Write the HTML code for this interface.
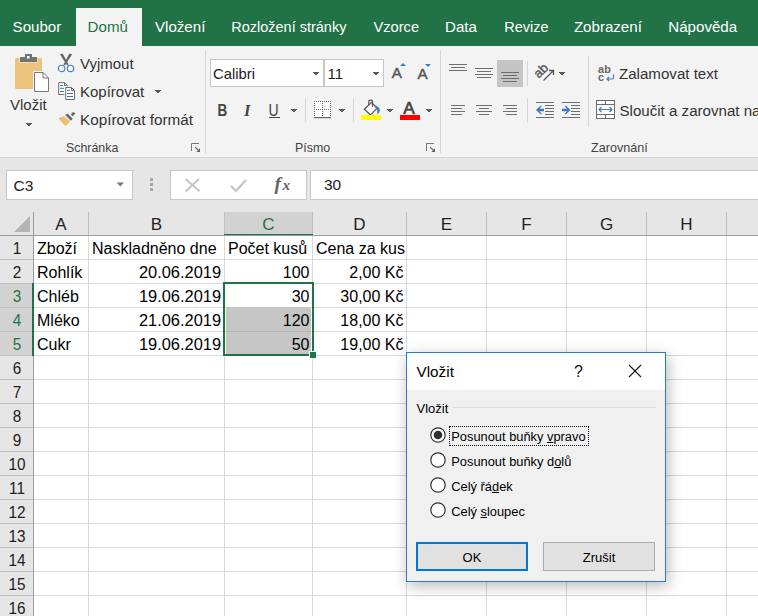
<!DOCTYPE html>
<html><head><meta charset="utf-8"><style>
html,body{margin:0;padding:0;width:758px;height:616px;overflow:hidden;background:#fff}
body{position:relative;font-family:"Liberation Sans",sans-serif}
.t{position:absolute;white-space:nowrap}
.s{}
.r{position:absolute;display:block}
</style></head><body>
<div class="r" style="left:0px;top:0px;width:758px;height:46px;background:#217346;"></div>
<div class="r" style="left:76px;top:8px;width:66px;height:38px;background:#f3f3f3;"></div>
<div class="t " style="left:12.6px;top:18px;font-size:15.1px;line-height:18px;color:#ffffff;">Soubor</div>
<div class="t " style="left:87.6px;top:18px;font-size:15.1px;line-height:18px;color:#217346;">Domů</div>
<div class="t " style="left:155px;top:18px;font-size:15.1px;line-height:18px;color:#ffffff;">Vložení</div>
<div class="t " style="left:231.2px;top:19px;font-size:14.5px;line-height:17px;color:#ffffff;">Rozložení stránky</div>
<div class="t " style="left:373.4px;top:18px;font-size:14.7px;line-height:18px;color:#ffffff;">Vzorce</div>
<div class="t " style="left:445px;top:18px;font-size:15.1px;line-height:18px;color:#ffffff;">Data</div>
<div class="t " style="left:504.2px;top:19px;font-size:14.5px;line-height:17px;color:#ffffff;">Revize</div>
<div class="t " style="left:573.9px;top:18px;font-size:15.1px;line-height:18px;color:#ffffff;">Zobrazení</div>
<div class="t " style="left:668.3px;top:18px;font-size:15.1px;line-height:18px;color:#ffffff;">Nápověda</div>
<div class="r" style="left:0px;top:46px;width:758px;height:111px;background:#f3f3f3;"></div>
<div class="r" style="left:0px;top:157px;width:758px;height:1px;background:#d6d6d6;"></div>
<div class="r" style="left:205px;top:50px;width:1px;height:103px;background:#d5d5d5;"></div>
<div class="r" style="left:440px;top:50px;width:1px;height:103px;background:#d5d5d5;"></div>
<svg class="r" style="left:10px;top:50px" width="45" height="45" viewBox="0 0 45 45">
<rect x="5" y="8" width="27" height="31" rx="1.5" fill="#ecc47d"/>
<rect x="9.5" y="6.5" width="18" height="6" fill="#f3f3f3"/>
<rect x="10" y="7" width="17" height="5" fill="#737373"/>
<rect x="15" y="4" width="7" height="4" fill="#737373"/>
<rect x="17" y="6" width="2.5" height="2.5" fill="#fff"/>
<rect x="23" y="21" width="17" height="22" fill="#f3f3f3"/>
<path d="M24.5 22.5 H33 L38.5 28 V41.5 H24.5 Z" fill="#fff" stroke="#777" stroke-width="1"/>
<path d="M33 22.5 V28 H38.5" fill="none" stroke="#777" stroke-width="1"/>
</svg>
<div class="t  s" style="left:10px;top:96px;font-size:15px;line-height:18px;color:#333;">Vložit</div>
<svg class="r" style="left:26px;top:123px" width="6" height="3"><rect x="0" y="0" width="6" height="1" fill="#595959"/><rect x="1" y="1" width="4" height="1" fill="#595959"/><rect x="2" y="2" width="2" height="1" fill="#595959"/></svg>
<svg class="r" style="left:54px;top:50px" width="26" height="26" viewBox="0 0 26 26">
<path d="M6 4.6 L8.6 3.6 L14.6 14.6 L13.2 15.4 Z" fill="#666"/>
<path d="M18.1 4.6 L15.5 3.6 L9.5 14.6 L10.9 15.4 Z" fill="#666"/>
<circle cx="7.6" cy="18.4" r="3.2" stroke="#4a7fc1" stroke-width="1.15" fill="none"/>
<circle cx="16.5" cy="18.4" r="3.2" stroke="#4a7fc1" stroke-width="1.15" fill="none"/>
</svg>
<div class="t  s" style="left:80px;top:55px;font-size:15px;line-height:18px;color:#333;">Vyjmout</div>
<svg class="r" style="left:54px;top:78px" width="26" height="26" viewBox="0 0 26 26">
<path d="M4.7 4.7 H10.5 L13.5 7.7 V16.5 H4.7 Z" fill="#fff" stroke="#6d6d6d" stroke-width="1"/>
<path d="M10.5 4.7 V7.7 H13.5" fill="none" stroke="#6d6d6d" stroke-width="1"/>
<path d="M6 7.5 H9 M6 10.3 H10 M6 13.5 H10" stroke="#3d74b8" stroke-width="1"/>
<path d="M11.7 9.5 H17.5 L20.5 12.5 V21.5 H11.7 Z" fill="#fff" stroke="#f3f3f3" stroke-width="2.6"/>
<path d="M11.7 9.5 H17.5 L20.5 12.5 V21.5 H11.7 Z" fill="#fff" stroke="#6d6d6d" stroke-width="1"/>
<path d="M17.5 9.5 V12.5 H20.5" fill="none" stroke="#6d6d6d" stroke-width="1"/>
<path d="M13 12.4 H16 M13 15.5 H19 M13 18.5 H19" stroke="#3d74b8" stroke-width="1"/>
</svg>
<div class="t  s" style="left:80px;top:83px;font-size:15px;line-height:18px;color:#333;">Kopírovat</div>
<svg class="r" style="left:155px;top:90px" width="6" height="3"><rect x="0" y="0" width="6" height="1" fill="#595959"/><rect x="1" y="1" width="4" height="1" fill="#595959"/><rect x="2" y="2" width="2" height="1" fill="#595959"/></svg>
<svg class="r" style="left:54px;top:106px" width="26" height="26" viewBox="0 0 26 26">
<path d="M4.4 12.2 L9.9 10.1 L16.2 15.6 L11.4 20.3 Z" fill="#eabf72"/>
<path d="M11.2 9.1 L13.5 7.6 L18.8 12.7 L16.9 14.8 Z" fill="#6a6a6a"/>
<path d="M16.7 8.4 L19.2 5.7 L21.5 7.6 L18.6 10.3 Z" fill="#6a6a6a"/>
</svg>
<div class="t  s" style="left:80px;top:111px;font-size:15.3px;line-height:18px;color:#333;">Kopírovat formát</div>
<div class="t " style="left:66px;top:141px;font-size:12.4px;line-height:15px;color:#444;">Schránka</div>
<svg class="r" style="left:191px;top:143px" width="10" height="10" viewBox="0 0 10 10"><path d="M0.5 8 V0.5 H8" stroke="#777" fill="none"/><path d="M4.2 4.2 L7.5 7.5" stroke="#666" stroke-width="1.1" fill="none"/><path d="M9 5.3 V9 H5.3 Z" fill="#666"/></svg>
<div class="r" style="left:210px;top:59px;width:114px;height:28px;background:#fff;box-sizing:border-box;border:1px solid #c6c6c6"></div>
<div class="t " style="left:213px;top:65px;font-size:14.8px;line-height:18px;color:#222;">Calibri</div>
<svg class="r" style="left:313px;top:72px" width="6" height="3"><rect x="0" y="0" width="6" height="1" fill="#595959"/><rect x="1" y="1" width="4" height="1" fill="#595959"/><rect x="2" y="2" width="2" height="1" fill="#595959"/></svg>
<div class="r" style="left:324px;top:59px;width:60px;height:28px;background:#fff;box-sizing:border-box;border:1px solid #c6c6c6"></div>
<div class="t " style="left:327.5px;top:65px;font-size:15px;line-height:18px;color:#222;">11</div>
<svg class="r" style="left:373px;top:72px" width="6" height="3"><rect x="0" y="0" width="6" height="1" fill="#595959"/><rect x="1" y="1" width="4" height="1" fill="#595959"/><rect x="2" y="2" width="2" height="1" fill="#595959"/></svg>
<svg class="r" style="left:388px;top:60px" width="20" height="22" viewBox="0 0 20 22"><text x="3.7" y="18" font-family="Liberation Sans" font-size="15.2" fill="#555" stroke="#555" stroke-width="0.45">A</text></svg>
<svg class="r" style="left:400px;top:63px" width="6" height="3" viewBox="0 0 6 3"><path d="M0 3 H6 L3 0 Z" fill="#3e7cc4"/></svg>
<svg class="r" style="left:413px;top:60px" width="20" height="22" viewBox="0 0 20 22"><text x="4.5" y="19" font-family="Liberation Sans" font-size="15.2" fill="#555" stroke="#555" stroke-width="0.45">A</text></svg>
<svg class="r" style="left:425px;top:64px" width="6" height="3" viewBox="0 0 6 3"><path d="M0 0 H6 L3 3 Z" fill="#3e7cc4"/></svg>
<svg class="r" style="left:214px;top:100px" width="16" height="20" viewBox="0 0 16 20"><text x="3.5" y="16" font-family="Liberation Sans" font-weight="bold" font-size="16.5" fill="#444" transform="translate(3.5 16) scale(0.82 1) translate(-3.5 -16)">B</text></svg>
<svg class="r" style="left:240px;top:100px" width="18" height="20" viewBox="0 0 18 20"><text x="4" y="16" font-family="Liberation Serif" font-weight="bold" font-style="italic" font-size="16.5" fill="#444">I</text></svg>
<svg class="r" style="left:266px;top:100px" width="18" height="20" viewBox="0 0 18 20"><text x="2.5" y="16" font-family="Liberation Sans" font-size="16.5" fill="#444" transform="translate(2.5 16) scale(0.85 1) translate(-2.5 -16)">U</text></svg>
<div class="r" style="left:269px;top:117px;width:11px;height:1.2px;background:#444;"></div>
<svg class="r" style="left:291px;top:109px" width="6" height="3"><rect x="0" y="0" width="6" height="1" fill="#595959"/><rect x="1" y="1" width="4" height="1" fill="#595959"/><rect x="2" y="2" width="2" height="1" fill="#595959"/></svg>
<div class="r" style="left:305px;top:98px;width:1px;height:24px;background:#d5d5d5;"></div>
<svg class="r" style="left:313px;top:100px" width="20" height="20" viewBox="0 0 20 20"><rect x="1" y="1" width="17" height="16" fill="#fff"/><rect x="1" y="1" width="1" height="1" fill="#666"/><rect x="1" y="3" width="1" height="1" fill="#666"/><rect x="1" y="5" width="1" height="1" fill="#666"/><rect x="1" y="7" width="1" height="1" fill="#666"/><rect x="1" y="9" width="1" height="1" fill="#666"/><rect x="1" y="11" width="1" height="1" fill="#666"/><rect x="1" y="13" width="1" height="1" fill="#666"/><rect x="1" y="15" width="1" height="1" fill="#666"/><rect x="3" y="1" width="1" height="1" fill="#666"/><rect x="3" y="9" width="1" height="1" fill="#666"/><rect x="5" y="1" width="1" height="1" fill="#666"/><rect x="5" y="9" width="1" height="1" fill="#666"/><rect x="7" y="1" width="1" height="1" fill="#666"/><rect x="7" y="9" width="1" height="1" fill="#666"/><rect x="9" y="1" width="1" height="1" fill="#666"/><rect x="9" y="3" width="1" height="1" fill="#666"/><rect x="9" y="5" width="1" height="1" fill="#666"/><rect x="9" y="7" width="1" height="1" fill="#666"/><rect x="9" y="9" width="1" height="1" fill="#666"/><rect x="9" y="11" width="1" height="1" fill="#666"/><rect x="9" y="13" width="1" height="1" fill="#666"/><rect x="9" y="15" width="1" height="1" fill="#666"/><rect x="11" y="1" width="1" height="1" fill="#666"/><rect x="11" y="9" width="1" height="1" fill="#666"/><rect x="13" y="1" width="1" height="1" fill="#666"/><rect x="13" y="9" width="1" height="1" fill="#666"/><rect x="15" y="1" width="1" height="1" fill="#666"/><rect x="15" y="9" width="1" height="1" fill="#666"/><rect x="17" y="1" width="1" height="1" fill="#666"/><rect x="17" y="3" width="1" height="1" fill="#666"/><rect x="17" y="5" width="1" height="1" fill="#666"/><rect x="17" y="7" width="1" height="1" fill="#666"/><rect x="17" y="9" width="1" height="1" fill="#666"/><rect x="17" y="11" width="1" height="1" fill="#666"/><rect x="17" y="13" width="1" height="1" fill="#666"/><rect x="17" y="15" width="1" height="1" fill="#666"/><rect x="1" y="17" width="17" height="1.2" fill="#666"/></svg>
<svg class="r" style="left:339px;top:109px" width="6" height="3"><rect x="0" y="0" width="6" height="1" fill="#595959"/><rect x="1" y="1" width="4" height="1" fill="#595959"/><rect x="2" y="2" width="2" height="1" fill="#595959"/></svg>
<div class="r" style="left:353px;top:98px;width:1px;height:24px;background:#d5d5d5;"></div>
<svg class="r" style="left:358px;top:96px" width="26" height="26" viewBox="0 0 26 26">
<path d="M6.3 13.3 L13.6 6.3 L18.9 12.3 L12.4 18.8 Z" fill="#fff" stroke="#555" stroke-width="1.2"/>
<path d="M10.8 9.3 V5.2 Q10.8 4.2 12 4.2 H13.2 Q14.5 4.2 14.5 5.5 V10.8" fill="none" stroke="#555" stroke-width="1.2"/>
<path d="M16.8 9 C19.8 10 21.8 12 21.8 14.2 C21.8 15.7 20.8 17.2 19.5 18.4 C19.6 15.5 18.8 12.8 17.2 11.2 Z" fill="#3e7cc4"/>
<rect x="3" y="19" width="20" height="5" fill="#ffff00"/>
</svg>
<svg class="r" style="left:387px;top:109px" width="6" height="3"><rect x="0" y="0" width="6" height="1" fill="#595959"/><rect x="1" y="1" width="4" height="1" fill="#595959"/><rect x="2" y="2" width="2" height="1" fill="#595959"/></svg>
<svg class="r" style="left:398px;top:96px" width="24" height="20" viewBox="0 0 24 20"><text x="5.3" y="17.8" font-family="Liberation Sans" font-size="17.2" fill="#444" stroke="#444" stroke-width="0.7">A</text></svg>
<div class="r" style="left:400px;top:115px;width:20px;height:5px;background:#ff0000;"></div>
<svg class="r" style="left:426px;top:109px" width="6" height="3"><rect x="0" y="0" width="6" height="1" fill="#595959"/><rect x="1" y="1" width="4" height="1" fill="#595959"/><rect x="2" y="2" width="2" height="1" fill="#595959"/></svg>
<div class="t " style="left:295px;top:141px;font-size:12.4px;line-height:15px;color:#444;">Písmo</div>
<svg class="r" style="left:426px;top:143px" width="10" height="10" viewBox="0 0 10 10"><path d="M0.5 8 V0.5 H8" stroke="#777" fill="none"/><path d="M4.2 4.2 L7.5 7.5" stroke="#666" stroke-width="1.1" fill="none"/><path d="M9 5.3 V9 H5.3 Z" fill="#666"/></svg>
<div class="r" style="left:497px;top:60px;width:26px;height:27px;background:#c5c5c5;"></div>
<div class="r" style="left:527px;top:61px;width:1px;height:25px;background:#d5d5d5;"></div>
<div class="r" style="left:527px;top:98px;width:1px;height:25px;background:#d5d5d5;"></div>
<div class="r" style="left:588px;top:56px;width:1px;height:71px;background:#d5d5d5;"></div>
<div class="r" style="left:449px;top:63.8px;width:18px;height:1.4px;background:#6e6e6e;"></div>
<div class="r" style="left:451px;top:66.8px;width:14px;height:1.4px;background:#6e6e6e;"></div>
<div class="r" style="left:449px;top:69.9px;width:18px;height:1.4px;background:#6e6e6e;"></div>
<div class="r" style="left:475px;top:67.8px;width:18px;height:1.4px;background:#6e6e6e;"></div>
<div class="r" style="left:477px;top:70.8px;width:14px;height:1.4px;background:#6e6e6e;"></div>
<div class="r" style="left:475px;top:73.8px;width:18px;height:1.4px;background:#6e6e6e;"></div>
<div class="r" style="left:477px;top:76.8px;width:14px;height:1.4px;background:#6e6e6e;"></div>
<div class="r" style="left:501px;top:71.8px;width:18px;height:1.4px;background:#6e6e6e;"></div>
<div class="r" style="left:503px;top:74.8px;width:14px;height:1.4px;background:#6e6e6e;"></div>
<div class="r" style="left:501px;top:77.8px;width:18px;height:1.4px;background:#6e6e6e;"></div>
<div class="r" style="left:503px;top:80.8px;width:14px;height:1.4px;background:#6e6e6e;"></div>
<div class="r" style="left:451px;top:104.7px;width:14px;height:1.4px;background:#6e6e6e;"></div>
<div class="r" style="left:451px;top:107.8px;width:11px;height:1.4px;background:#6e6e6e;"></div>
<div class="r" style="left:451px;top:110.8px;width:14px;height:1.4px;background:#6e6e6e;"></div>
<div class="r" style="left:451px;top:113.8px;width:11px;height:1.4px;background:#6e6e6e;"></div>
<div class="r" style="left:476px;top:104.7px;width:16px;height:1.4px;background:#6e6e6e;"></div>
<div class="r" style="left:479px;top:107.8px;width:10px;height:1.4px;background:#6e6e6e;"></div>
<div class="r" style="left:476px;top:110.8px;width:16px;height:1.4px;background:#6e6e6e;"></div>
<div class="r" style="left:479px;top:113.8px;width:10px;height:1.4px;background:#6e6e6e;"></div>
<div class="r" style="left:503px;top:104.7px;width:14px;height:1.4px;background:#6e6e6e;"></div>
<div class="r" style="left:506px;top:107.8px;width:11px;height:1.4px;background:#6e6e6e;"></div>
<div class="r" style="left:503px;top:110.8px;width:14px;height:1.4px;background:#6e6e6e;"></div>
<div class="r" style="left:506px;top:113.8px;width:11px;height:1.4px;background:#6e6e6e;"></div>
<svg class="r" style="left:533px;top:62px" width="24" height="22" viewBox="0 0 24 22">
<text x="0" y="0" transform="translate(5.8 16.8) rotate(-45)" font-family="Liberation Sans" font-size="13" fill="#555" stroke="#555" stroke-width="0.35">ab</text>
<path d="M10.5 18.5 L20.5 8.5 M16 8.5 H20.5 V13" stroke="#555" stroke-width="1.3" fill="none"/>
</svg>
<svg class="r" style="left:559px;top:72px" width="6" height="3"><rect x="0" y="0" width="6" height="1" fill="#595959"/><rect x="1" y="1" width="4" height="1" fill="#595959"/><rect x="2" y="2" width="2" height="1" fill="#595959"/></svg>
<div class="r" style="left:536px;top:101.6px;width:18px;height:1.4px;background:#6e6e6e;"></div>
<div class="r" style="left:545px;top:104.7px;width:9px;height:1.4px;background:#6e6e6e;"></div>
<div class="r" style="left:545px;top:107.7px;width:9px;height:1.4px;background:#6e6e6e;"></div>
<div class="r" style="left:545px;top:110.8px;width:9px;height:1.4px;background:#6e6e6e;"></div>
<div class="r" style="left:545px;top:113.8px;width:9px;height:1.4px;background:#6e6e6e;"></div>
<div class="r" style="left:536px;top:116.9px;width:18px;height:1.4px;background:#6e6e6e;"></div>
<svg class="r" style="left:535px;top:104px" width="10" height="12" viewBox="0 0 10 12"><path d="M1 6 L5.5 1.8 H7 L4.5 4.8 H9 V7.2 H4.5 L7 10.2 H5.5 Z" fill="#3d78bd"/></svg>
<div class="r" style="left:562px;top:101.6px;width:18px;height:1.4px;background:#6e6e6e;"></div>
<div class="r" style="left:571px;top:104.7px;width:9px;height:1.4px;background:#6e6e6e;"></div>
<div class="r" style="left:571px;top:107.7px;width:9px;height:1.4px;background:#6e6e6e;"></div>
<div class="r" style="left:571px;top:110.8px;width:9px;height:1.4px;background:#6e6e6e;"></div>
<div class="r" style="left:571px;top:113.8px;width:9px;height:1.4px;background:#6e6e6e;"></div>
<div class="r" style="left:562px;top:116.9px;width:18px;height:1.4px;background:#6e6e6e;"></div>
<svg class="r" style="left:561px;top:104px" width="10" height="12" viewBox="0 0 10 12"><path d="M9.5 6 L5 1.8 H3.5 L6 4.8 H1 V7.2 H6 L3.5 10.2 H5 Z" fill="#3d78bd"/></svg>
<svg class="r" style="left:596px;top:64px" width="20" height="19" viewBox="0 0 20 19">
<text x="2" y="9.3" font-family="Liberation Sans" font-size="10.8" font-weight="bold" fill="#666" letter-spacing="0.3">ab</text>
<text x="2" y="16.8" font-family="Liberation Sans" font-size="10.8" font-weight="bold" fill="#666">c</text>
<path d="M17.5 10.5 V13.5 C17.5 14.5 17 15 16 15 H11 M13 13 L11 15 L13 17" stroke="#3e7cc4" stroke-width="1.2" fill="none"/>
</svg>
<div class="t  s" style="left:619px;top:65px;font-size:15.1px;line-height:18px;color:#333;">Zalamovat text</div>
<svg class="r" style="left:595px;top:99px" width="21" height="21" viewBox="0 0 21 21">
<rect x="1.5" y="1.5" width="18" height="18" fill="#fff" stroke="#6a6a6a" stroke-width="1"/>
<path d="M1.5 5.5 H19.5 M1.5 15.5 H19.5 M10.5 1.5 V5.5 M10.5 15.5 V19.5" stroke="#6a6a6a" stroke-width="1"/>
<path d="M4 10.5 H17 M6.5 8 L4 10.5 L6.5 13 M14.5 8 L17 10.5 L14.5 13" stroke="#3e7cc4" stroke-width="1.2" fill="none"/>
</svg>
<div class="t  s" style="left:619.5px;top:102px;font-size:15.1px;line-height:18px;color:#333;">Sloučit a zarovnat na</div>
<div class="t " style="left:591px;top:141px;font-size:12.6px;line-height:15px;color:#444;">Zarovnání</div>
<div class="r" style="left:0px;top:158px;width:758px;height:54px;background:#e6e6e6;"></div>
<div class="r" style="left:6px;top:170px;width:127px;height:30px;background:#fff;box-sizing:border-box;border:1px solid #c6c6c6"></div>
<div class="t " style="left:13.5px;top:176px;font-size:15.5px;line-height:19px;color:#222;">C3</div>
<svg class="r" style="left:116px;top:182px" width="9" height="6" viewBox="0 0 9 6"><path d="M0.5 0.5 H8 L4.25 4.5 Z" fill="#777"/></svg>
<div class="r" style="left:150px;top:178px;width:3px;height:3px;background:#a6a6a6;"></div>
<div class="r" style="left:150px;top:183px;width:3px;height:3px;background:#a6a6a6;"></div>
<div class="r" style="left:150px;top:188px;width:3px;height:3px;background:#a6a6a6;"></div>
<div class="r" style="left:170px;top:170px;width:137px;height:30px;background:#fff;box-sizing:border-box;border:1px solid #c6c6c6"></div>
<svg class="r" style="left:183px;top:177px" width="19" height="17" viewBox="0 0 19 17"><path d="M2.8 2.3 L16.5 14.2 M16 2 L2.5 14.5" stroke="#c6c6c6" stroke-width="2.1" fill="none"/></svg>
<svg class="r" style="left:228px;top:177px" width="21" height="17" viewBox="0 0 21 17"><path d="M3 9 L8 14 L18 3" stroke="#c4c4c4" stroke-width="2.2" fill="none"/></svg>
<svg class="r" style="left:271px;top:172px" width="24" height="24" viewBox="0 0 24 24"><text x="3.5" y="17.5" font-family="Liberation Serif" font-style="italic" font-weight="bold" font-size="19.5" fill="#666">f</text><text x="11.5" y="17.5" font-family="Liberation Serif" font-style="italic" font-weight="bold" font-size="15.5" fill="#666">x</text></svg>
<div class="r" style="left:310px;top:170px;width:460px;height:30px;background:#fff;box-sizing:border-box;border:1px solid #c6c6c6"></div>
<div class="t " style="left:324px;top:175px;font-size:15.5px;line-height:19px;color:#222;">30</div>
<div class="r" style="left:0px;top:212px;width:758px;height:24px;background:#e6e6e6;"></div>
<div class="r" style="left:0px;top:236px;width:34px;height:380px;background:#e6e6e6;"></div>
<div class="r" style="left:34px;top:236px;width:724px;height:380px;background:#fff;"></div>
<div class="r" style="left:224px;top:212px;width:89px;height:24px;background:#d2d2d2;"></div>
<div class="r" style="left:88px;top:212px;width:1px;height:24px;background:#bfbfbf;"></div>
<div class="r" style="left:224px;top:212px;width:1px;height:24px;background:#bfbfbf;"></div>
<div class="r" style="left:312px;top:212px;width:1px;height:24px;background:#bfbfbf;"></div>
<div class="r" style="left:406px;top:212px;width:1px;height:24px;background:#bfbfbf;"></div>
<div class="r" style="left:486px;top:212px;width:1px;height:24px;background:#bfbfbf;"></div>
<div class="r" style="left:566px;top:212px;width:1px;height:24px;background:#bfbfbf;"></div>
<div class="r" style="left:646px;top:212px;width:1px;height:24px;background:#bfbfbf;"></div>
<div class="r" style="left:726px;top:212px;width:1px;height:24px;background:#bfbfbf;"></div>
<div class="r" style="left:224px;top:234px;width:89px;height:2px;background:#217346;"></div>
<div class="r" style="left:33px;top:212px;width:1px;height:404px;background:#9b9b9b;"></div>
<div class="r" style="left:0px;top:235px;width:758px;height:1px;background:#9b9b9b;"></div>
<svg class="r" style="left:13px;top:215px" width="18" height="18" viewBox="0 0 18 18"><path d="M17 1 V17 H1 Z" fill="#b4b4b4"/></svg>
<div class="t" style="left:-39.0px;width:200px;text-align:center;top:215px;font-size:17px;line-height:20px;color:#222;">A</div>
<div class="t" style="left:56.5px;width:200px;text-align:center;top:215px;font-size:17px;line-height:20px;color:#222;">B</div>
<div class="t" style="left:168.5px;width:200px;text-align:center;top:215px;font-size:17px;line-height:20px;color:#217346;">C</div>
<div class="t" style="left:259.5px;width:200px;text-align:center;top:215px;font-size:17px;line-height:20px;color:#222;">D</div>
<div class="t" style="left:346.5px;width:200px;text-align:center;top:215px;font-size:17px;line-height:20px;color:#222;">E</div>
<div class="t" style="left:426.5px;width:200px;text-align:center;top:215px;font-size:17px;line-height:20px;color:#222;">F</div>
<div class="t" style="left:506.5px;width:200px;text-align:center;top:215px;font-size:17px;line-height:20px;color:#222;">G</div>
<div class="t" style="left:586.5px;width:200px;text-align:center;top:215px;font-size:17px;line-height:20px;color:#222;">H</div>
<div class="r" style="left:0px;top:283px;width:33px;height:72px;background:#d2d2d2;"></div>
<div class="r" style="left:0px;top:259px;width:33px;height:1px;background:#bfbfbf;"></div>
<div class="r" style="left:34px;top:259px;width:724px;height:1px;background:#d9d9d9;"></div>
<div class="t" style="left:-82.8px;width:200px;text-align:center;top:239px;font-size:17px;line-height:20px;color:#222;transform:scaleX(0.9)">1</div>
<div class="r" style="left:0px;top:283px;width:33px;height:1px;background:#bfbfbf;"></div>
<div class="r" style="left:34px;top:283px;width:724px;height:1px;background:#d9d9d9;"></div>
<div class="t" style="left:-82.8px;width:200px;text-align:center;top:263px;font-size:17px;line-height:20px;color:#222;transform:scaleX(0.9)">2</div>
<div class="r" style="left:0px;top:307px;width:33px;height:1px;background:#bfbfbf;"></div>
<div class="r" style="left:34px;top:307px;width:724px;height:1px;background:#d9d9d9;"></div>
<div class="t" style="left:-82.8px;width:200px;text-align:center;top:287px;font-size:17px;line-height:20px;color:#217346;transform:scaleX(0.9)">3</div>
<div class="r" style="left:0px;top:331px;width:33px;height:1px;background:#bfbfbf;"></div>
<div class="r" style="left:34px;top:331px;width:724px;height:1px;background:#d9d9d9;"></div>
<div class="t" style="left:-82.8px;width:200px;text-align:center;top:311px;font-size:17px;line-height:20px;color:#217346;transform:scaleX(0.9)">4</div>
<div class="r" style="left:0px;top:355px;width:33px;height:1px;background:#bfbfbf;"></div>
<div class="r" style="left:34px;top:355px;width:724px;height:1px;background:#d9d9d9;"></div>
<div class="t" style="left:-82.8px;width:200px;text-align:center;top:335px;font-size:17px;line-height:20px;color:#217346;transform:scaleX(0.9)">5</div>
<div class="r" style="left:0px;top:379px;width:33px;height:1px;background:#bfbfbf;"></div>
<div class="r" style="left:34px;top:379px;width:724px;height:1px;background:#d9d9d9;"></div>
<div class="t" style="left:-82.8px;width:200px;text-align:center;top:359px;font-size:17px;line-height:20px;color:#222;transform:scaleX(0.9)">6</div>
<div class="r" style="left:0px;top:403px;width:33px;height:1px;background:#bfbfbf;"></div>
<div class="r" style="left:34px;top:403px;width:724px;height:1px;background:#d9d9d9;"></div>
<div class="t" style="left:-82.8px;width:200px;text-align:center;top:383px;font-size:17px;line-height:20px;color:#222;transform:scaleX(0.9)">7</div>
<div class="r" style="left:0px;top:427px;width:33px;height:1px;background:#bfbfbf;"></div>
<div class="r" style="left:34px;top:427px;width:724px;height:1px;background:#d9d9d9;"></div>
<div class="t" style="left:-82.8px;width:200px;text-align:center;top:407px;font-size:17px;line-height:20px;color:#222;transform:scaleX(0.9)">8</div>
<div class="r" style="left:0px;top:451px;width:33px;height:1px;background:#bfbfbf;"></div>
<div class="r" style="left:34px;top:451px;width:724px;height:1px;background:#d9d9d9;"></div>
<div class="t" style="left:-82.8px;width:200px;text-align:center;top:431px;font-size:17px;line-height:20px;color:#222;transform:scaleX(0.9)">9</div>
<div class="r" style="left:0px;top:475px;width:33px;height:1px;background:#bfbfbf;"></div>
<div class="r" style="left:34px;top:475px;width:724px;height:1px;background:#d9d9d9;"></div>
<div class="t" style="left:-82.8px;width:200px;text-align:center;top:455px;font-size:17px;line-height:20px;color:#222;transform:scaleX(0.9)">10</div>
<div class="r" style="left:0px;top:499px;width:33px;height:1px;background:#bfbfbf;"></div>
<div class="r" style="left:34px;top:499px;width:724px;height:1px;background:#d9d9d9;"></div>
<div class="t" style="left:-82.8px;width:200px;text-align:center;top:479px;font-size:17px;line-height:20px;color:#222;transform:scaleX(0.9)">11</div>
<div class="r" style="left:0px;top:523px;width:33px;height:1px;background:#bfbfbf;"></div>
<div class="r" style="left:34px;top:523px;width:724px;height:1px;background:#d9d9d9;"></div>
<div class="t" style="left:-82.8px;width:200px;text-align:center;top:503px;font-size:17px;line-height:20px;color:#222;transform:scaleX(0.9)">12</div>
<div class="r" style="left:0px;top:547px;width:33px;height:1px;background:#bfbfbf;"></div>
<div class="r" style="left:34px;top:547px;width:724px;height:1px;background:#d9d9d9;"></div>
<div class="t" style="left:-82.8px;width:200px;text-align:center;top:527px;font-size:17px;line-height:20px;color:#222;transform:scaleX(0.9)">13</div>
<div class="r" style="left:0px;top:571px;width:33px;height:1px;background:#bfbfbf;"></div>
<div class="r" style="left:34px;top:571px;width:724px;height:1px;background:#d9d9d9;"></div>
<div class="t" style="left:-82.8px;width:200px;text-align:center;top:551px;font-size:17px;line-height:20px;color:#222;transform:scaleX(0.9)">14</div>
<div class="r" style="left:0px;top:595px;width:33px;height:1px;background:#bfbfbf;"></div>
<div class="r" style="left:34px;top:595px;width:724px;height:1px;background:#d9d9d9;"></div>
<div class="t" style="left:-82.8px;width:200px;text-align:center;top:575px;font-size:17px;line-height:20px;color:#222;transform:scaleX(0.9)">15</div>
<div class="r" style="left:0px;top:619px;width:33px;height:1px;background:#bfbfbf;"></div>
<div class="r" style="left:34px;top:619px;width:724px;height:1px;background:#d9d9d9;"></div>
<div class="t" style="left:-82.8px;width:200px;text-align:center;top:599px;font-size:17px;line-height:20px;color:#222;transform:scaleX(0.9)">16</div>
<div class="r" style="left:88px;top:236px;width:1px;height:380px;background:#d9d9d9;"></div>
<div class="r" style="left:224px;top:236px;width:1px;height:380px;background:#d9d9d9;"></div>
<div class="r" style="left:312px;top:236px;width:1px;height:380px;background:#d9d9d9;"></div>
<div class="r" style="left:406px;top:236px;width:1px;height:380px;background:#d9d9d9;"></div>
<div class="r" style="left:486px;top:236px;width:1px;height:380px;background:#d9d9d9;"></div>
<div class="r" style="left:566px;top:236px;width:1px;height:380px;background:#d9d9d9;"></div>
<div class="r" style="left:646px;top:236px;width:1px;height:380px;background:#d9d9d9;"></div>
<div class="r" style="left:726px;top:236px;width:1px;height:380px;background:#d9d9d9;"></div>
<div class="r" style="left:32px;top:283px;width:2px;height:73px;background:#217346;"></div>
<div class="r" style="left:226px;top:307px;width:85px;height:47px;background:#c6c6c6;"></div>
<div class="r" style="left:226px;top:331px;width:85px;height:1px;background:#b3b3b3;"></div>
<div class="t " style="left:37px;top:239px;font-size:16px;line-height:19px;color:#000;">Zboží</div>
<div class="t " style="left:92px;top:239px;font-size:16px;line-height:19px;color:#000;">Naskladněno dne</div>
<div class="t " style="left:228px;top:239px;font-size:16px;line-height:19px;color:#000;">Počet kusů</div>
<div class="t " style="left:316px;top:239px;font-size:16px;line-height:19px;color:#000;">Cena za kus</div>
<div class="t " style="left:37px;top:263px;font-size:16px;line-height:19px;color:#000;">Rohlík</div>
<div class="t" style="left:-79.5px;width:300px;text-align:right;top:263px;font-size:16px;line-height:19px;color:#000;transform:scaleX(1.025);transform-origin:right">20.06.2019</div>
<div class="t" style="left:9.5px;width:300px;text-align:right;top:263px;font-size:16px;line-height:19px;color:#000;">100</div>
<div class="t" style="left:103.5px;width:300px;text-align:right;top:263px;font-size:16px;line-height:19px;color:#000;">2,00 Kč</div>
<div class="t " style="left:37px;top:287px;font-size:16px;line-height:19px;color:#000;">Chléb</div>
<div class="t" style="left:-79.5px;width:300px;text-align:right;top:287px;font-size:16px;line-height:19px;color:#000;transform:scaleX(1.025);transform-origin:right">19.06.2019</div>
<div class="t" style="left:9.5px;width:300px;text-align:right;top:287px;font-size:16px;line-height:19px;color:#000;">30</div>
<div class="t" style="left:103.5px;width:300px;text-align:right;top:287px;font-size:16px;line-height:19px;color:#000;">30,00 Kč</div>
<div class="t " style="left:37px;top:311px;font-size:16px;line-height:19px;color:#000;">Mléko</div>
<div class="t" style="left:-79.5px;width:300px;text-align:right;top:311px;font-size:16px;line-height:19px;color:#000;transform:scaleX(1.025);transform-origin:right">21.06.2019</div>
<div class="t" style="left:9.5px;width:300px;text-align:right;top:311px;font-size:16px;line-height:19px;color:#000;">120</div>
<div class="t" style="left:103.5px;width:300px;text-align:right;top:311px;font-size:16px;line-height:19px;color:#000;">18,00 Kč</div>
<div class="t " style="left:37px;top:335px;font-size:16px;line-height:19px;color:#000;">Cukr</div>
<div class="t" style="left:-79.5px;width:300px;text-align:right;top:335px;font-size:16px;line-height:19px;color:#000;transform:scaleX(1.025);transform-origin:right">19.06.2019</div>
<div class="t" style="left:9.5px;width:300px;text-align:right;top:335px;font-size:16px;line-height:19px;color:#000;">50</div>
<div class="t" style="left:103.5px;width:300px;text-align:right;top:335px;font-size:16px;line-height:19px;color:#000;">19,00 Kč</div>
<div class="r" style="left:223px;top:282px;width:91px;height:74px;box-sizing:border-box;border:2px solid #217346"></div>
<div class="r" style="left:310px;top:352px;width:6px;height:6px;background:#217346;"></div>
<div class="r" style="left:309px;top:351px;width:8px;height:1px;background:#fff;"></div>
<div class="r" style="left:309px;top:351px;width:1px;height:8px;background:#fff;"></div>
<div class="r" style="left:406px;top:352px;width:260px;height:230px;box-shadow:2px 4px 14px rgba(0,0,0,0.28)"></div>
<div class="r" style="left:406px;top:352px;width:260px;height:230px;background:#f0f0f0;box-sizing:border-box;border:1px solid #2b7cd3"></div>
<div class="r" style="left:407px;top:353px;width:258px;height:37px;background:#ffffff;"></div>
<div class="t " style="left:416.5px;top:363px;font-size:15.3px;line-height:18px;color:#000;">Vložit</div>
<div class="t " style="left:574px;top:362px;font-size:16px;line-height:19px;color:#111;">?</div>
<svg class="r" style="left:628px;top:364px" width="14" height="14" viewBox="0 0 14 14"><path d="M1 1 L13 13 M13 1 L1 13" stroke="#111" stroke-width="1.1"/></svg>
<div class="t " style="left:416.5px;top:401px;font-size:13px;line-height:16px;color:#000;">Vložit</div>
<div class="r" style="left:453px;top:407px;width:203px;height:1px;background:#dcdcdc;"></div>
<svg class="r" style="left:430px;top:427px" width="16" height="16" viewBox="0 0 16 16"><circle cx="8" cy="8" r="7.2" fill="#fff" stroke="#333" stroke-width="1.2"/><circle cx="8" cy="8" r="4.3" fill="#333"/></svg>
<div class="t " style="left:451.3px;top:429px;font-size:12.85px;line-height:15px;color:#000;">Posunout buňky <u>v</u>pravo</div>
<svg class="r" style="left:430px;top:452px" width="16" height="16" viewBox="0 0 16 16"><circle cx="8" cy="8" r="7.2" fill="#fff" stroke="#333" stroke-width="1.2"/></svg>
<div class="t " style="left:451.3px;top:454px;font-size:12.85px;line-height:15px;color:#000;">Posunout buňky d<u>o</u>lů</div>
<svg class="r" style="left:430px;top:477px" width="16" height="16" viewBox="0 0 16 16"><circle cx="8" cy="8" r="7.2" fill="#fff" stroke="#333" stroke-width="1.2"/></svg>
<div class="t " style="left:451.3px;top:479px;font-size:12.85px;line-height:15px;color:#000;">Celý řá<u>d</u>ek</div>
<svg class="r" style="left:430px;top:502px" width="16" height="16" viewBox="0 0 16 16"><circle cx="8" cy="8" r="7.2" fill="#fff" stroke="#333" stroke-width="1.2"/></svg>
<div class="t " style="left:451.3px;top:504px;font-size:12.85px;line-height:15px;color:#000;">Celý <u>s</u>loupec</div>
<div class="r" style="left:449px;top:426px;width:140px;height:20px;box-sizing:border-box;border:1px dotted #000"></div>
<div class="r" style="left:416px;top:542px;width:112px;height:29px;background:#e1e1e1;box-sizing:border-box;border:2px solid #0078d7"></div>
<div class="t" style="left:372px;width:200px;text-align:center;top:550px;font-size:13px;line-height:16px;color:#000;">OK</div>
<div class="r" style="left:543px;top:542px;width:112px;height:29px;background:#e1e1e1;box-sizing:border-box;border:1px solid #adadad"></div>
<div class="t" style="left:499px;width:200px;text-align:center;top:550px;font-size:13px;line-height:16px;color:#000;">Zrušit</div>
</body></html>
